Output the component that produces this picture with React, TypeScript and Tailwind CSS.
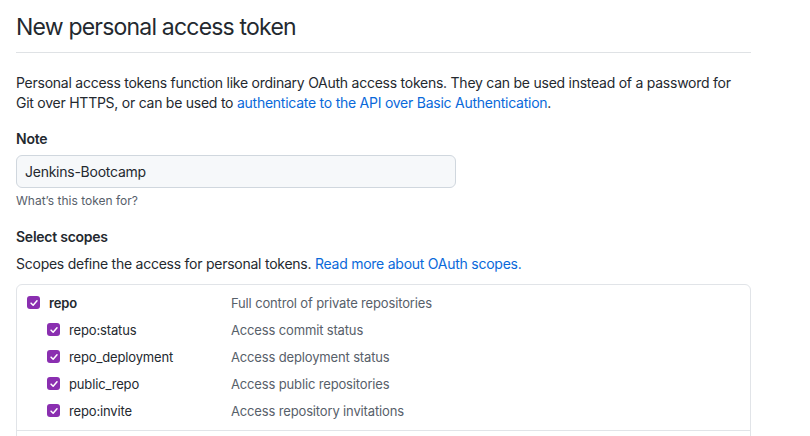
// 新建个人访问令牌页面：标题、说明、Note 输入框与 scopes 列表
const font = { fontFamily: 'Inter, "Liberation Sans", Arial, sans-serif' }

type Scope = { name: string; desc: string; sub?: boolean }

const scopes: Scope[] = [
  { name: 'repo', desc: 'Full control of private repositories' },
  { name: 'repo:status', desc: 'Access commit status', sub: true },
  { name: 'repo_deployment', desc: 'Access deployment status', sub: true },
  { name: 'public_repo', desc: 'Access public repositories', sub: true },
  { name: 'repo:invite', desc: 'Access repository invitations', sub: true },
]

// 勾选框：紫色底 + 白色对勾
function Check() {
  return (
    <span className="flex h-[13px] w-[13px] shrink-0 items-center justify-center rounded-[3px] bg-[#8a2fb0]">
      <svg viewBox="0 0 12 12" className="h-[10px] w-[10px]" fill="none">
        <path d="M2.5 6.2 5 8.6 9.6 3.4" stroke="white" strokeWidth="1.8" strokeLinecap="round" strokeLinejoin="round" />
      </svg>
    </span>
  )
}

function ScopeRow({ s }: { s: Scope }) {
  return (
    <div className="flex h-[27px] items-center text-[13px] tracking-[-0.15px]">
      <div className={`flex w-[214px] items-center gap-[9px] ${s.sub ? 'pl-[30px]' : 'pl-[10px]'}`}>
        <Check />
        <span className={s.sub ? 'text-[#24292f]' : 'font-semibold text-[#24292f]'}>{s.name}</span>
      </div>
      <span className="text-[#57606a]">{s.desc}</span>
    </div>
  )
}

export default function App() {
  return (
    <div style={font} className="h-[436px] overflow-hidden bg-white px-4 text-[14px] leading-5 tracking-[-0.25px] text-[#24292f]">
      <div className="w-[735px]">
        {/* 标题 */}
        <h1 className="border-b border-[#dfe2e5] pt-[12px] pb-[9px] text-[23px] leading-[31px] font-normal tracking-[-0.8px]">
          New personal access token
        </h1>

        <p className="mt-[20px]">
          Personal access tokens function like ordinary OAuth access tokens. They can be used instead of a password for
          <br />
          Git over HTTPS, or can be used to{' '}
          <a className="text-[#0969da]">authenticate to the API over Basic Authentication</a>.
        </p>

        {/* Note 输入 */}
        <div className="mt-[16px]">
          <div className="font-semibold">Note</div>
          <div className="mt-[6px] flex h-[33px] w-[440px] items-center rounded-md border border-[#d0d7de] bg-[#f6f8fa] px-[8px] text-[14px]">
            Jenkins-Bootcamp
          </div>
          <div className="mt-[4px] text-[12px] leading-[18px] tracking-normal text-[#57606a]">What’s this token for?</div>
        </div>

        {/* Scopes */}
        <div className="mt-[17px]">
          <div className="font-semibold">Select scopes</div>
          <p className="mt-[7px]">
            Scopes define the access for personal tokens.{' '}
            <a className="text-[#0969da]">Read more about OAuth scopes.</a>
          </p>
          <div className="mt-[10px] rounded-md border border-[#e1e4e8]">
            <div className="border-b border-[#e1e4e8] pt-[4px] pb-[6px]">
              {scopes.map((s) => (
                <ScopeRow key={s.name} s={s} />
              ))}
            </div>
            <div className="h-[40px]" />
          </div>
        </div>
      </div>
    </div>
  )
}
